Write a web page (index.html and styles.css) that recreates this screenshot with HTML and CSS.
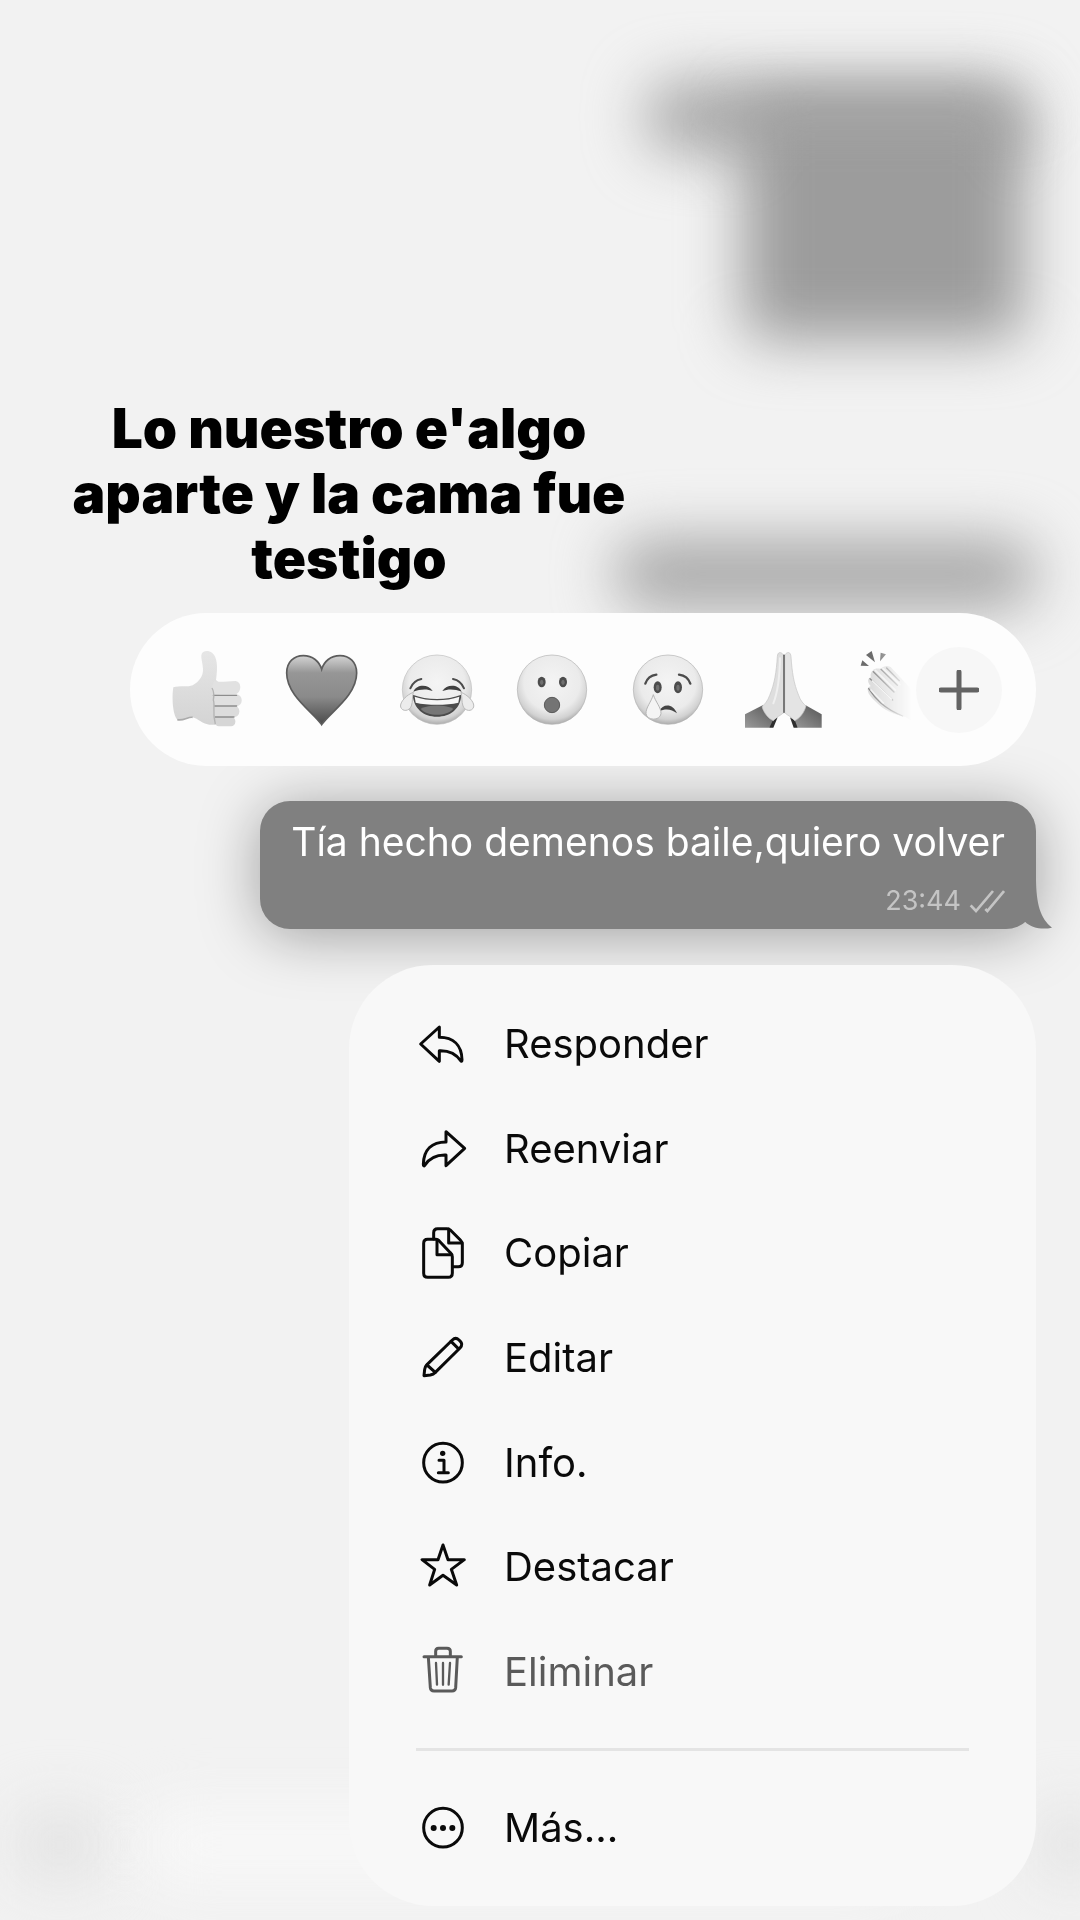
FILE: index.html
```html
<!DOCTYPE html>
<html lang="es">

<head>
    <meta charset="UTF-8">
    <meta name="viewport" content="width=device-width, initial-scale=1.0">
    <title>Mensaje</title>
    <link rel="stylesheet" href="styles.css">
</head>

<body>
    <!-- Chat desenfocado de fondo -->
    <div class="backdrop" aria-hidden="true">
        <div class="blob blob-top"></div>
        <div class="blob blob-media"></div>
        <div class="blob blob-line"></div>
        <div class="blob blob-left"></div>
        <div class="blob blob-right"></div>
        <div class="blob blob-input"></div>
    </div>

    <main class="screen">
        <h1 class="caption">Lo nuestro e'algo aparte y la cama fue testigo</h1>

        <div class="reactions">
            <div class="reaction-list">
                <button class="reaction" type="button" aria-label="Me gusta">
                    <svg viewBox="144 153 234 234">
                        <defs>
                            <linearGradient id="skin" x1="0" y1="0" x2="0" y2="1">
                                <stop offset="0" stop-color="#e6e6e6" />
                                <stop offset="1" stop-color="#d4d4d4" />
                            </linearGradient>
                        </defs>
                        <path d="M160 262C178 256 205 262 218 256C238 244 250 228 249 206C248 190 243 176 244 166C246 152 264 150 276 158C292 170 294 200 288 240L300 250L296 374L268 374C245 371 235 356 218 352C205 349 190 364 172 359C158 345 155 290 160 262Z" fill="url(#skin)" />
                        <path d="M218 352C205 349 190 364 172 359" fill="none" stroke="#ababab" stroke-width="5" />
                        <rect x="284" y="350" width="62" height="29" rx="13" fill="#d6d6d6" />
                        <rect x="280" y="317" width="78" height="34" rx="16" fill="#dcdcdc" />
                        <rect x="280" y="283" width="85" height="35" rx="16" fill="#e0e0e0" />
                        <path d="M282 244C300 248 325 243 347 243C365 245 366 275 348 283H282L276 262Z" fill="#e1e1e1" />
                        <path d="M280 286H350M284 318H350M286 351H342" stroke="#8d8d8d" stroke-width="4" stroke-linecap="round" />
                        <path d="M276 264C284 278 282 290 280 300C286 315 276 335 286 372" fill="none" stroke="#b4b4b4" stroke-width="4" />
                    </svg>
                </button>
                <button class="reaction" type="button" aria-label="Corazón">
                    <svg viewBox="489 153 234 234">
                        <defs>
                            <linearGradient id="heart" x1="0" y1="0" x2="0" y2="1">
                                <stop offset="0" stop-color="#d4d4d4" />
                                <stop offset=".25" stop-color="#969696" />
                                <stop offset=".6" stop-color="#8a8a8a" />
                                <stop offset="1" stop-color="#4a4a4a" />
                            </linearGradient>
                        </defs>
                        <path d="M605 374C582 338 500 288 500 219C500 186 522 167 550 167C578 167 598 184 605 208C612 184 632 167 660 167C688 167 710 186 710 219C710 288 628 338 605 374Z" fill="url(#heart)" stroke="#5c5c5c" stroke-width="5" />
                    </svg>
                </button>
                <button class="reaction" type="button" aria-label="Risa">
                    <svg viewBox="834 153 234 234">
                        <defs>
                            <radialGradient id="face" cx=".5" cy=".4" r=".62">
                                <stop offset="0" stop-color="#f4f4f4" />
                                <stop offset=".65" stop-color="#ebebeb" />
                                <stop offset=".85" stop-color="#d2d2d2" />
                                <stop offset="1" stop-color="#a2a2a2" />
                            </radialGradient>
                        </defs>
                        <circle cx="951" cy="269" r="104" fill="url(#face)" stroke="#bdbdbd" stroke-width="2" />
                        <path d="M871 265C877 250 889 240 904 237M999 237C1014 240 1026 250 1032 265" fill="none" stroke="#4c4c4c" stroke-width="6" stroke-linecap="round" />
                        <path d="M880 275C890 252 925 252 938 273C922 266 900 267 880 275ZM967 273C980 252 1015 252 1025 275C1005 267 985 266 967 273Z" fill="#404040" />
                        <path d="M878 284C920 301 982 301 1024 284C1022 325 992 350 951 350C910 350 881 325 878 284Z" fill="#4b4b4b" />
                        <path d="M884 290C925 304 978 304 1018 290L1015 308C980 316 922 316 887 308Z" fill="#f6f6f6" />
                        <path d="M902 326C930 313 972 313 1000 326C980 350 922 350 902 326Z" fill="#777" />
                        <path d="M880 277C862 283 838 306 842 321C847 336 868 334 874 318C879 305 876 290 880 277ZM1023 277C1041 283 1065 306 1061 321C1056 336 1035 334 1029 318C1024 305 1027 290 1023 277Z" fill="#ececec" stroke="#b9b9b9" stroke-width="3" />
                    </svg>
                </button>
                <button class="reaction" type="button" aria-label="Asombro">
                    <svg viewBox="99 153 234 234">
                        <circle cx="216" cy="269" r="104" fill="url(#face)" stroke="#b0b0b0" stroke-width="2" />
                        <ellipse cx="185" cy="246" rx="12" ry="16" fill="#4c4c4c" />
                        <ellipse cx="249" cy="246" rx="12" ry="16" fill="#4c4c4c" />
                        <ellipse cx="185" cy="247" rx="5" ry="8" fill="#707070" />
                        <ellipse cx="249" cy="247" rx="5" ry="8" fill="#707070" />
                        <circle cx="216" cy="315" r="23" fill="#747474" stroke="#5a5a5a" stroke-width="3" />
                    </svg>
                </button>
                <button class="reaction" type="button" aria-label="Tristeza">
                    <svg viewBox="444 153 234 234">
                        <circle cx="564" cy="269" r="104" fill="url(#face)" stroke="#b0b0b0" stroke-width="2" />
                        <path d="M496 251C501 236 514 226 529 224M597 224C612 226 626 236 631 251" fill="none" stroke="#4c4c4c" stroke-width="7" stroke-linecap="round" />
                        <ellipse cx="533" cy="262" rx="12" ry="18" fill="#4c4c4c" />
                        <ellipse cx="594" cy="262" rx="12" ry="18" fill="#4c4c4c" />
                        <ellipse cx="533" cy="263" rx="5" ry="9" fill="#707070" />
                        <ellipse cx="594" cy="263" rx="5" ry="9" fill="#707070" />
                        <path d="M537 334C550 309 579 311 591 340C574 326 556 325 537 334Z" fill="#444" />
                        <path d="M520 284C514 305 497 323 498 341C500 362 540 364 543 341C544 323 526 305 520 284Z" fill="#f4f4f4" stroke="#b5b5b5" stroke-width="3" />
                    </svg>
                </button>
                <button class="reaction" type="button" aria-label="Gracias">
                    <svg viewBox="789 153 234 234">
                        <defs>
                            <linearGradient id="sleeve" x1="0" y1="1" x2="1" y2="0">
                                <stop offset="0" stop-color="#9a9a9a" />
                                <stop offset="1" stop-color="#555" />
                            </linearGradient>
                        </defs>
                        <path d="M795 343L848 316L888 360L868 383H795Z" fill="url(#sleeve)" />
                        <path d="M1025 343L977 316L935 360L953 383H1025Z" fill="url(#sleeve)" />
                        <path d="M868 383L878 362L893 352L880 383ZM953 383L945 362L930 352L941 383Z" fill="#2e2e2e" />
                        <path d="M911 165C902 154 893 155 892 170C889 215 884 250 869 286C864 302 853 314 846 320C852 340 866 356 880 362C890 350 900 348 911 338Z" fill="#dedede" stroke="#c4c4c4" stroke-width="2" />
                        <path d="M914 165C922 154 932 155 933 170C936 215 941 250 956 286C961 302 971 312 978 318C972 340 958 356 944 362C934 350 925 348 914 338Z" fill="#e4e4e4" stroke="#c4c4c4" stroke-width="2" />
                        <path d="M912 166V337" stroke="#666" stroke-width="5" stroke-linecap="round" />
                        <path d="M900 175C899 235 894 275 880 310" fill="none" stroke="#efefef" stroke-width="6" stroke-linecap="round" />
                    </svg>
                </button>
                <button class="reaction" type="button" aria-label="Aplauso">
                    <svg viewBox="114 153 234 234">
                        <path d="M122 197L127 181L147 198ZM138 165L155 153L165 187ZM180 184L182 158L198 163Z" fill="#6c6c6c" />
                        <path d="M158 212C166 202 177 207 183 206C190 198 202 196 212 201L290 285V370L255 350C225 345 190 330 168 306C157 294 144 284 143 269C143 260 150 260 152 258C142 248 141 235 153 232C150 224 153 216 158 212Z" fill="#dedede" />
                        <path d="M160 215L222 276M183 208L232 256M200 204L238 242M150 236L218 300M146 266C165 295 190 325 248 348" fill="none" stroke="#8e8e8e" stroke-width="4" stroke-linecap="round" />
                        <path d="M166 211L226 270M189 206L240 254M157 243L214 297M153 270L190 309" fill="none" stroke="#f2f2f2" stroke-width="5" stroke-linecap="round" />
                    </svg>
                </button>
            </div>
            <button class="reaction-more" type="button" aria-label="Más reacciones">
                <svg viewBox="0 0 40 40">
                    <path d="M20 2V38M2 20H38" />
                </svg>
            </button>
        </div>

        <article class="bubble">
            <p class="bubble-text">Tía hecho demenos baile,quiero volver</p>
            <div class="bubble-meta">
                <time datetime="23:44">23:44</time>
                <svg class="ticks" viewBox="936 322 108 72" aria-hidden="true">
                    <path d="M941 371L957 388L1008 328M985 382L991 388L1041 328" />
                </svg>
            </div>
            <svg class="bubble-tail" viewBox="1059 300 117 150" aria-hidden="true">
                <path d="M1080 300H1125C1126 375 1138 418 1173 446C1143 453 1112 447 1092 428L1070 400Z" />
            </svg>
        </article>

        <nav class="menu" aria-label="Opciones del mensaje">
            <div class="menu-group">
                <button class="menu-item" type="button">
                    <svg class="icon" viewBox="228 204 156 156">
                        <path d="M298 231L242 282L298 334V302C325 301 347 310 362 332C364 335 366 334 366 329C365 285 340 262 298 262Z" />
                    </svg>
                    <span>Responder</span>
                </button>
                <button class="menu-item" type="button">
                    <svg class="icon" viewBox="228 519 156 156">
                        <path d="M318 545L374 595L318 647V615C291 614 269 623 254 646C252 649 250 648 250 643C251 599 276 576 318 576Z" />
                    </svg>
                    <span>Reenviar</span>
                </button>
                <button class="menu-item" type="button">
                    <svg class="icon" viewBox="228 832 156 156">
                        <path d="M281 868V849Q281 837 293 837H321Q327 837 331 841L361 871Q367 877 367 884V939Q367 951 355 951H340" />
                        <path d="M326 838V880H366" />
                        <path d="M263 869H288Q293 869 297 873L331 909Q337 915 337 921V970Q337 983 325 983H263Q251 983 251 971V881Q251 869 263 869Z" />
                        <path d="M291 871V915H335" />
                    </svg>
                    <span>Copiar</span>
                </button>
                <button class="menu-item" type="button">
                    <svg class="icon" viewBox="228 66 156 156">
                        <path d="M252 197L254 178Q255 170 261 164L337 90Q347 80 357 90L361 94Q370 103 360 114L286 187Q280 193 271 195Z" />
                        <path d="M261 165L286 187M333 94L355 116" />
                    </svg>
                    <span>Editar</span>
                </button>
                <button class="menu-item" type="button">
                    <svg class="icon" viewBox="228 380 156 156">
                        <circle cx="309" cy="457" r="58" />
                        <circle class="dot" cx="308" cy="429" r="8" />
                        <path d="M297 450H312V487M295 487H325" />
                    </svg>
                    <span>Info.</span>
                </button>
                <button class="menu-item" type="button">
                    <svg class="icon" viewBox="228 693 156 156">
                        <path d="M309 705L324 749H373L334 778L350 825L309 796L269 825L284 778L246 749H294Z" />
                    </svg>
                    <span>Destacar</span>
                </button>
                <button class="menu-item menu-item-delete" type="button">
                    <svg class="icon" viewBox="228 107 156 156">
                        <path d="M252 139H364M287 138V123Q287 114 296 114H321Q331 114 331 123V138M265 140L271 232Q272 242 282 242H336Q346 242 347 232L352 140" />
                        <path class="thin" d="M288 158L291 223M309 158V223M330 158L326 223" />
                    </svg>
                    <span>Eliminar</span>
                </button>
            </div>
            <hr class="menu-line">
            <button class="menu-item" type="button">
                <svg class="icon" viewBox="228 576 156 156">
                    <circle cx="309" cy="653" r="58" />
                    <circle class="dot" cx="281" cy="654" r="9" />
                    <circle class="dot" cx="309" cy="654" r="9" />
                    <circle class="dot" cx="337" cy="654" r="9" />
                </svg>
                <span>Más...</span>
            </button>
        </nav>
    </main>
</body>

</html>
```
FILE: styles.css
```css
* {
    box-sizing: border-box;
}

body {
    margin: 0;
    background: #f2f2f2;
    color: #0a0a0a;
    font-family: Inter, "Liberation Sans", Arial, sans-serif;
}

button {
    border: none;
    padding: 0;
    background: none;
    color: inherit;
    font: inherit;
    cursor: pointer;
}

/* Fondo desenfocado */
.backdrop {
    position: fixed;
    inset: 0;
    overflow: hidden;
    z-index: -1;
}

.blob {
    position: absolute;
    background: #9c9c9c;
    filter: blur(30px);
}

.blob-top {
    top: 82px;
    right: 56px;
    width: 35%;
    height: 70px;
    border-radius: 30px;
    background: #a4a4a4;
}

.blob-media {
    top: 100px;
    right: 56px;
    width: 26%;
    height: 240px;
    border-radius: 20px;
}

.blob-line {
    top: 540px;
    right: 44px;
    width: 39%;
    height: 68px;
    border-radius: 30px;
    background: #a4a4a4;
}

.blob-left {
    bottom: 40px;
    left: 20px;
    width: 80px;
    height: 70px;
    background: #e2e2e2;
}

.blob-right {
    bottom: 40px;
    right: -20px;
    width: 60px;
    height: 70px;
    background: #e2e2e2;
}

.blob-input {
    bottom: 40px;
    left: 150px;
    width: 70%;
    height: 70px;
    background: #f8f8f8;
}

.screen {
    display: flex;
    flex-direction: column;
    align-items: flex-end;
    padding: 396px 44px 14px;
}

.caption {
    align-self: flex-start;
    width: calc(100% - 382px);
    margin: 0 0 22px;
    color: #000;
    font-size: 55px;
    font-weight: 900;
    line-height: 65px;
    text-align: center;
}

/* Reacciones */
.reactions {
    position: relative;
    z-index: 1;
    display: flex;
    align-items: center;
    width: calc(100% - 86px);
    height: 153px;
    margin-bottom: 35px;
    padding: 0 34px 0 38px;
    border-radius: 77px;
    background: #fdfdfd;
}

.reaction-list {
    display: flex;
    flex: 1;
    gap: 37px;
    min-width: 0;
    padding: 10px 0;
    overflow: hidden;
    mask-image: linear-gradient(to left, transparent 4px, #000 44px);
}

.reaction {
    flex: none;
    width: 78px;
    height: 78px;
}

.reaction svg {
    display: block;
    overflow: visible;
}

.reaction-more {
    display: flex;
    flex: none;
    align-items: center;
    justify-content: center;
    width: 86px;
    height: 86px;
    border-radius: 50%;
    background: #f7f7f7;
}

.reaction-more svg {
    width: 40px;
    fill: none;
    stroke: #636363;
    stroke-width: 5;
    stroke-linecap: round;
}

/* Mensaje */
.bubble {
    position: relative;
    margin-bottom: 36px;
    padding: 17px 31px 12px;
    border-radius: 30px;
    background: #808080;
    color: #fff;
    box-shadow: 0 6px 60px rgba(0, 0, 0, 0.35);
}

.bubble-text {
    margin: 0 0 19px;
    font-size: 39px;
    line-height: 48px;
}

.bubble-meta {
    display: flex;
    align-items: center;
    justify-content: flex-end;
    gap: 8px;
    color: #c4c4c4;
    font-size: 27px;
    line-height: 32px;
}

.ticks {
    width: 36px;
    fill: none;
    stroke: currentColor;
    stroke-width: 8;
}

.bubble-tail {
    position: absolute;
    right: -17px;
    bottom: 0;
    width: 39px;
    fill: #808080;
}

/* Menú */
.menu {
    position: relative;
    z-index: 1;
    width: calc(100% - 305px);
    padding: 27px 67px 26px;
    border-radius: 84px;
    background: #f8f8f8;
}

.menu-group {
    display: grid;
    grid-auto-rows: 1fr;
    min-height: 732px;
}

.menu-item {
    display: flex;
    align-items: center;
    gap: 36px;
    width: 100%;
    min-height: 104px;
    font-size: 40px;
    line-height: 48px;
    text-align: left;
}

.menu-item-delete {
    color: #5a5a5a;
}

.menu-line {
    height: 3px;
    margin: 24px 0 25px;
    border: none;
    background: #e4e4e4;
}

.icon {
    flex: none;
    width: 52px;
    height: 52px;
    fill: none;
    stroke: currentColor;
    stroke-width: 9;
    stroke-linecap: round;
    stroke-linejoin: round;
}

.icon .dot {
    fill: currentColor;
    stroke: none;
}

.icon .thin {
    stroke-width: 7;
}
```
